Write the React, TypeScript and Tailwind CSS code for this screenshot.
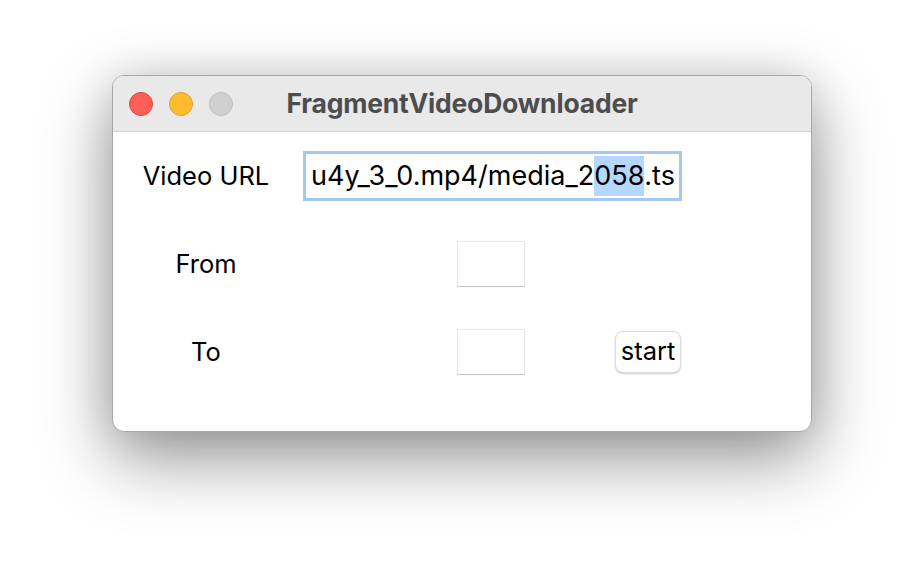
export default function App() {
  return (
    <div className="w-[924px] h-[580px] bg-white pl-[112px] pt-[75px] font-['Inter','Liberation_Sans',sans-serif]">
      <div className="w-[700px] h-[357px] rounded-[12px] bg-white overflow-hidden border border-[#a8a8a8] shadow-[0_26px_70px_rgba(0,0,0,0.42),0_0_40px_rgba(0,0,0,0.1)]">
        {/* title bar */}
        <div className="relative h-[56px] bg-[#e9e9e9] border-b border-[#d2d2d2] flex items-center">
          <div className="flex items-center gap-[16px] pl-[16px]">
            <span className="w-[24px] h-[24px] rounded-full bg-[#ff5f57] border border-[#e0443e]" />
            <span className="w-[24px] h-[24px] rounded-full bg-[#febc2e] border border-[#dea123]" />
            <span className="w-[24px] h-[24px] rounded-full bg-[#d0d0d0] border border-[#bcbcbc]" />
          </div>
          <div className="absolute inset-0 flex items-center justify-center text-[26.5px] font-bold text-[#4d4d4d] tracking-[-0.2px]">
            FragmentVideoDownloader
          </div>
        </div>

        {/* content */}
        <div className="text-[25.5px] text-black">
          <div className="h-[88px] flex items-center">
            <div className="w-[186px] text-center">Video URL</div>
            <div className="ml-[4px] w-[379px] h-[50px] border-[3px] border-[#a4c8f2] flex items-center pl-[5px] overflow-hidden whitespace-nowrap text-[27px]">
              <span>u4y_3_0.mp4/media_2</span>
              <span className="bg-[#b4d7fe]">058</span>
              <span>.ts</span>
            </div>
          </div>
          <div className="h-[88px] flex items-center">
            <div className="w-[186px] text-center">From</div>
            <div className="ml-[158px] w-[68px] h-[46px] border border-[#e6e6e6] border-b-[#c4c4c4]" />
          </div>
          <div className="h-[88px] flex items-center">
            <div className="w-[186px] text-center">To</div>
            <div className="ml-[158px] w-[68px] h-[46px] border border-[#e6e6e6] border-b-[#c4c4c4]" />
            <button className="ml-[90px] w-[66px] h-[42px] rounded-[8px] bg-white border border-[#dcdcdc] shadow-[0_1px_2px_rgba(0,0,0,0.2)] flex items-center justify-center leading-none pb-[2px]">
              start
            </button>
          </div>
        </div>
      </div>
    </div>
  );
}
